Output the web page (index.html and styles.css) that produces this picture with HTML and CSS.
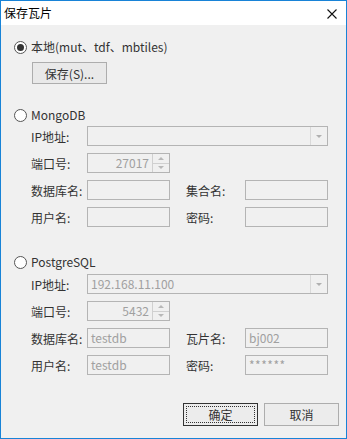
FILE: index.html
```html
<!DOCTYPE html>
<html lang="zh">
<head>
  <meta charset="UTF-8">
  <title>保存瓦片</title>
  <link rel="stylesheet" href="styles.css">
</head>
<body>
  <div class="window">
    <div class="titlebar">
      <span class="title">保存瓦片</span>
      <svg class="close" width="10" height="10" viewBox="0 0 10 10">
        <path d="M0.5 0.5 L9.5 9.5 M9.5 0.5 L0.5 9.5" stroke="#111" stroke-width="1.1" fill="none"/>
      </svg>
    </div>

    <div class="content">
      <div class="radio first"><span class="dot checked"></span>本地(mut、tdf、mbtiles)</div>
      <div class="btn save">保存(S)...</div>

      <div class="radio group"><span class="dot"></span>MongoDB</div>
      <div class="row top">
        <span class="lbl">IP地址:</span>
        <div class="field combo"><span class="val"></span><span class="drop"><span class="tri"></span></span></div>
      </div>
      <div class="row">
        <span class="lbl">端口号:</span>
        <div class="field spin"><span class="val num">27017</span><span class="arrows"><span class="up"></span><span class="down"></span></span></div>
      </div>
      <div class="row">
        <span class="lbl">数据库名:</span>
        <div class="field"></div>
        <span class="lbl2">集合名:</span>
        <div class="field"></div>
      </div>
      <div class="row">
        <span class="lbl">用户名:</span>
        <div class="field"></div>
        <span class="lbl2">密码:</span>
        <div class="field"></div>
      </div>

      <div class="radio group pg"><span class="dot"></span>PostgreSQL</div>
      <div class="row top">
        <span class="lbl">IP地址:</span>
        <div class="field combo"><span class="val">192.168.11.100</span><span class="drop"><span class="tri"></span></span></div>
      </div>
      <div class="row">
        <span class="lbl">端口号:</span>
        <div class="field spin"><span class="val num">5432</span><span class="arrows"><span class="up"></span><span class="down"></span></span></div>
      </div>
      <div class="row">
        <span class="lbl">数据库名:</span>
        <div class="field"><span class="val">testdb</span></div>
        <span class="lbl2">瓦片名:</span>
        <div class="field"><span class="val">bj002</span></div>
      </div>
      <div class="row">
        <span class="lbl">用户名:</span>
        <div class="field"><span class="val">testdb</span></div>
        <span class="lbl2">密码:</span>
        <div class="field"><span class="val pwd">******</span></div>
      </div>

      <div class="footer">
        <div class="btn default"><span class="focus">确定</span></div>
        <div class="btn">取消</div>
      </div>
    </div>
  </div>
</body>
</html>
```

FILE: styles.css
```css
body {
  margin: 0;
  font-family: "Noto Sans CJK SC", "Liberation Sans", sans-serif;
  font-size: 12px;
  color: #333;
}

.window {
  width: 347px;
  height: 439px;
  box-sizing: border-box;
  border: 1px solid #1883d7;
  background: #f0f0f0;
}

.titlebar {
  height: 24px;
  background: #fff;
  display: flex;
  align-items: center;
  justify-content: space-between;
  padding-left: 3px;
}

.title {
  color: #000;
  line-height: 16px;
}

.close {
  margin-right: 9px;
  margin-top: 2px;
}

.content {
  padding-left: 13px;
}

.radio {
  display: flex;
  align-items: center;
  height: 16px;
  line-height: 16px;
}

.radio.first {
  margin-top: 14px;
}

.radio.group {
  margin-top: 23px;
}

.radio.pg {
  margin-top: 27px;
}

.dot {
  width: 13px;
  height: 13px;
  box-sizing: border-box;
  border: 1px solid #555;
  border-radius: 50%;
  background: #fff;
  margin-right: 4px;
  display: flex;
  align-items: center;
  justify-content: center;
}

.dot.checked::after {
  content: "";
  width: 7px;
  height: 7px;
  border-radius: 50%;
  background: #333;
}

.btn {
  width: 75px;
  height: 23px;
  box-sizing: border-box;
  border: 1px solid #adadad;
  background: #ececec;
  display: flex;
  align-items: center;
  justify-content: center;
  color: #333;
}

.btn.save {
  margin-left: 18px;
  margin-top: 7px;
  height: 22px;
  background: #e9e9e9;
}

.row {
  display: flex;
  align-items: center;
  height: 20px;
  margin-top: 7px;
  padding-left: 17px;
}

.row.top {
  margin-top: 3px;
}

.radio.pg + .row.top {
  margin-top: 4px;
}

.lbl {
  width: 56px;
  white-space: nowrap;
}

.lbl2 {
  width: 59px;
  margin-left: 16px;
  white-space: nowrap;
}

.field {
  width: 83px;
  height: 20px;
  box-sizing: border-box;
  border: 1px solid #b4b4b4;
  display: flex;
  align-items: center;
  color: #a0a0a0;
}

.val {
  flex: 1;
  padding-left: 3px;
  line-height: 18px;
}

.val.num {
  text-align: right;
  padding-right: 3px;
}

.val.pwd {
  letter-spacing: 0.5px;
}

.combo {
  width: 241px;
}

.drop {
  width: 16px;
  height: 18px;
  border-left: 1px solid #d9d9d9;
  display: flex;
  align-items: center;
  justify-content: center;
}

.tri {
  width: 0;
  height: 0;
  border-left: 3px solid transparent;
  border-right: 3px solid transparent;
  border-top: 3px solid #b0b0b0;
}

.arrows {
  width: 16px;
  height: 18px;
  border-left: 1px solid #d0d0d0;
  display: flex;
  flex-direction: column;
}

.arrows .up,
.arrows .down {
  flex: 1;
  display: flex;
  align-items: center;
  justify-content: center;
}

.arrows .up {
  border-bottom: 1px solid #d0d0d0;
}

.arrows .up::after,
.arrows .down::after {
  content: "";
  width: 0;
  height: 0;
  border-left: 3px solid transparent;
  border-right: 3px solid transparent;
}

.arrows .up::after {
  border-bottom: 3px solid #b8b8b8;
}

.arrows .down::after {
  border-top: 3px solid #b8b8b8;
}

.footer {
  display: flex;
  justify-content: flex-end;
  gap: 6px;
  margin-top: 28px;
  padding-right: 7px;
}

.btn.default {
  border-color: #333;
  padding: 2px;
}

.focus {
  flex: 1;
  align-self: stretch;
  border: 1px dotted #333;
  display: flex;
  align-items: center;
  justify-content: center;
}
```
